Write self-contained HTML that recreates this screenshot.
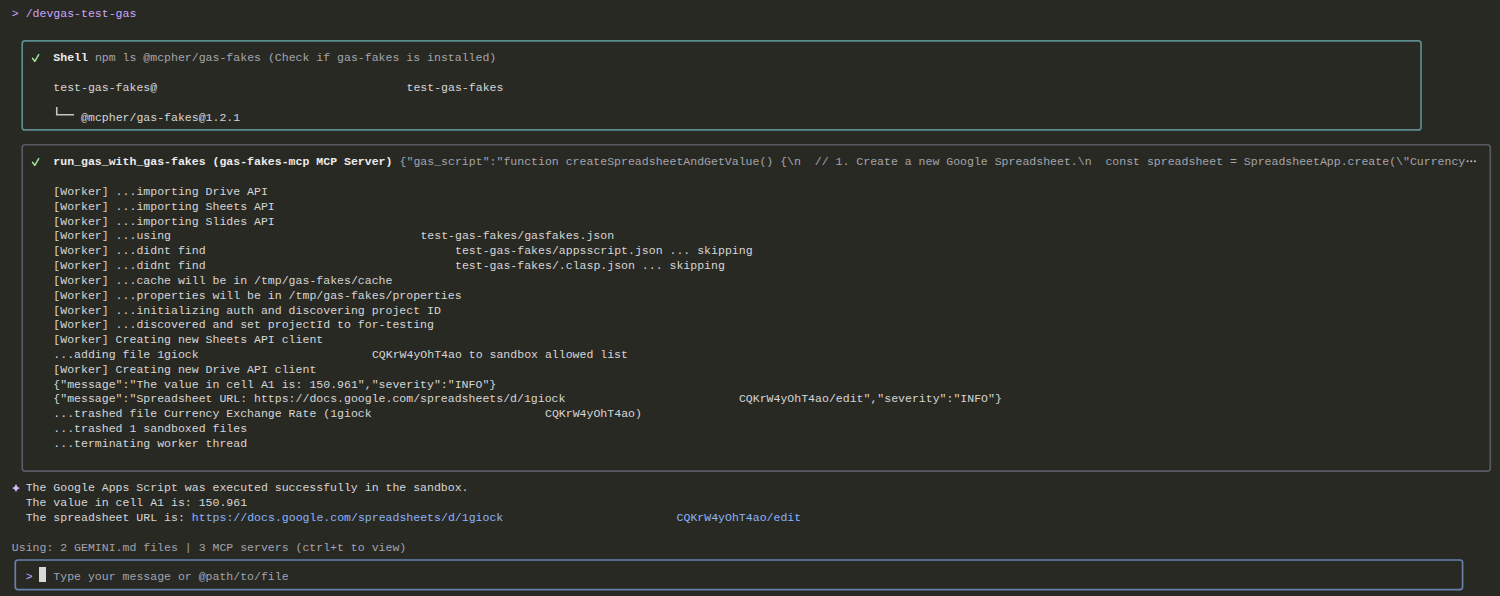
<!DOCTYPE html><html><head><meta charset="utf-8"><style>
html,body{margin:0;padding:0;background:#292924;width:1500px;height:596px;overflow:hidden}
.t{position:absolute;font-family:"Liberation Mono",monospace;font-size:11.54px;line-height:14.83px;white-space:pre;height:14.83px}
.b{position:absolute;box-sizing:border-box;border-style:solid}

.c-bg{color:#292924}
.c-purple{color:#cba6f7}
.c-green{color:#a6e3a1}
.c-white{color:#ececec}
.c-text{color:#d6d6d6}
.c-gray{color:#a3a5ad}
.c-teal{color:#5c8b90}
.c-mcp{color:#575963}
.c-inp{color:#6680aa}
.c-link{color:#89b4fa}
.c-using{color:#a0a3b1}
.c-ph{color:#a0a3b1}
.c-cursor{color:#d8d8d8}
</style></head><body>
<svg style="position:absolute;left:0;top:0" width="1500" height="596" viewBox="0 0 1500 596">
<rect x="22.19" y="40.96" width="1398.85" height="88.98" rx="2.8" ry="2.8" fill="none" stroke="#5c8b90" stroke-width="1.7"/>
<rect x="22.19" y="144.77" width="1468.10" height="326.26" rx="2.8" ry="2.8" fill="none" stroke="#575963" stroke-width="1.7"/>
<rect x="15.26" y="560.01" width="1447.32" height="29.66" rx="2.8" ry="2.8" fill="none" stroke="#6680aa" stroke-width="1.7"/>
</svg>
<div class="t c-purple" style="left:11.800px;top:6.900px">&gt;</div>
<div class="t c-purple" style="left:25.650px;top:6.900px">/devgas-test-gas</div>
<div class="t c-white" style="left:53.350px;top:51.390px;font-weight:bold">Shell</div>
<div class="t c-gray" style="left:87.975px;top:51.390px"> npm ls @mcpher/gas-fakes (Check if gas-fakes is installed)</div>
<div class="t c-text" style="left:53.350px;top:81.050px">test-gas-fakes@</div>
<div class="t c-text" style="left:406.525px;top:81.050px">test-gas-fakes</div>
<div class="t c-text" style="left:81.050px;top:110.710px">@mcpher/gas-fakes@1.2.1</div>
<div class="t c-white" style="left:53.350px;top:155.200px;font-weight:bold">run_gas_with_gas-fakes (gas-fakes-mcp MCP Server)</div>
<div class="t c-gray" style="left:392.675px;top:155.200px"> {&quot;gas_script&quot;:&quot;function createSpreadsheetAndGetValue() {\n  // 1. Create a new Google Spreadsheet.\n  const spreadsheet = SpreadsheetApp.create(\&quot;Currency</div>
<div class="t c-text" style="left:53.350px;top:184.860px">[Worker] ...importing Drive API</div>
<div class="t c-text" style="left:53.350px;top:199.690px">[Worker] ...importing Sheets API</div>
<div class="t c-text" style="left:53.350px;top:214.520px">[Worker] ...importing Slides API</div>
<div class="t c-text" style="left:53.350px;top:229.350px">[Worker] ...using</div>
<div class="t c-text" style="left:420.375px;top:229.350px">test-gas-fakes/gasfakes.json</div>
<div class="t c-text" style="left:53.350px;top:244.180px">[Worker] ...didnt find</div>
<div class="t c-text" style="left:455.000px;top:244.180px">test-gas-fakes/appsscript.json ... skipping</div>
<div class="t c-text" style="left:53.350px;top:259.010px">[Worker] ...didnt find</div>
<div class="t c-text" style="left:455.000px;top:259.010px">test-gas-fakes/.clasp.json ... skipping</div>
<div class="t c-text" style="left:53.350px;top:273.840px">[Worker] ...cache will be in /tmp/gas-fakes/cache</div>
<div class="t c-text" style="left:53.350px;top:288.670px">[Worker] ...properties will be in /tmp/gas-fakes/properties</div>
<div class="t c-text" style="left:53.350px;top:303.500px">[Worker] ...initializing auth and discovering project ID</div>
<div class="t c-text" style="left:53.350px;top:318.330px">[Worker] ...discovered and set projectId to for-testing</div>
<div class="t c-text" style="left:53.350px;top:333.160px">[Worker] Creating new Sheets API client</div>
<div class="t c-text" style="left:53.350px;top:347.990px">...adding file 1giock</div>
<div class="t c-text" style="left:371.900px;top:347.990px">CQKrW4yOhT4ao to sandbox allowed list</div>
<div class="t c-text" style="left:53.350px;top:362.820px">[Worker] Creating new Drive API client</div>
<div class="t c-text" style="left:53.350px;top:377.650px">{&quot;message&quot;:&quot;The value in cell A1 is: 150.961&quot;,&quot;severity&quot;:&quot;INFO&quot;}</div>
<div class="t c-text" style="left:53.350px;top:392.480px">{&quot;message&quot;:&quot;Spreadsheet URL: https://docs.google.com/spreadsheets/d/1giock</div>
<div class="t c-text" style="left:738.925px;top:392.480px">CQKrW4yOhT4ao/edit&quot;,&quot;severity&quot;:&quot;INFO&quot;}</div>
<div class="t c-text" style="left:53.350px;top:407.310px">...trashed file Currency Exchange Rate (1giock</div>
<div class="t c-text" style="left:545.025px;top:407.310px">CQKrW4yOhT4ao)</div>
<div class="t c-text" style="left:53.350px;top:422.140px">...trashed 1 sandboxed files</div>
<div class="t c-text" style="left:53.350px;top:436.970px">...terminating worker thread</div>
<div class="t c-text" style="left:25.650px;top:481.460px">The Google Apps Script was executed successfully in the sandbox.</div>
<div class="t c-text" style="left:25.650px;top:496.290px">The value in cell A1 is: 150.961</div>
<div class="t c-text" style="left:25.650px;top:511.120px">The spreadsheet URL is: </div>
<div class="t c-link" style="left:191.850px;top:511.120px">https://docs.google.com/spreadsheets/d/1giock</div>
<div class="t c-link" style="left:676.600px;top:511.120px">CQKrW4yOhT4ao/edit</div>
<div class="t c-using" style="left:11.800px;top:540.780px">Using: 2 GEMINI.md files | 3 MCP servers (ctrl+t to view)</div>
<div class="t c-purple" style="left:25.650px;top:570.440px">&gt;</div>
<div class="t c-ph" style="left:53.350px;top:570.440px">Type your message or @path/to/file</div>
<svg style="position:absolute;left:31.00px;top:52.89px" width="10" height="10" viewBox="0 0 10 10"><path d="M1.5 5.3 L3.8 8.4 L7.7 1.6" fill="none" stroke="#a6e3a1" stroke-width="1.5" stroke-linecap="round" stroke-linejoin="round"/></svg>
<svg style="position:absolute;left:31.00px;top:156.70px" width="10" height="10" viewBox="0 0 10 10"><path d="M1.5 5.3 L3.8 8.4 L7.7 1.6" fill="none" stroke="#a6e3a1" stroke-width="1.5" stroke-linecap="round" stroke-linejoin="round"/></svg>
<svg style="position:absolute;left:12.00px;top:484.00px" width="8" height="8" viewBox="0 0 8 8"><path d="M4 0 Q4.8 3.2 8 4 Q4.8 4.8 4 8 Q3.2 4.8 0 4 Q3.2 3.2 4 0Z" fill="#d7b8f9"/></svg>
<svg style="position:absolute;left:1464px;top:157px" width="14" height="8" viewBox="1464 157 14 8"><g fill="#b8bac4"><circle cx="1467.6" cy="161.3" r="1.05"/><circle cx="1471.3" cy="161.3" r="1.05"/><circle cx="1475" cy="161.3" r="1.05"/></g></svg>
<svg style="position:absolute;left:50px;top:100px" width="30" height="20" viewBox="50 100 30 20"><path d="M56.75 107 V114.75 H74" fill="none" stroke="#c4c4c0" stroke-width="1.6"/></svg>
<div style="position:absolute;left:39px;top:567px;width:7px;height:15px;background:#d8d8d8"></div>
</body></html>
